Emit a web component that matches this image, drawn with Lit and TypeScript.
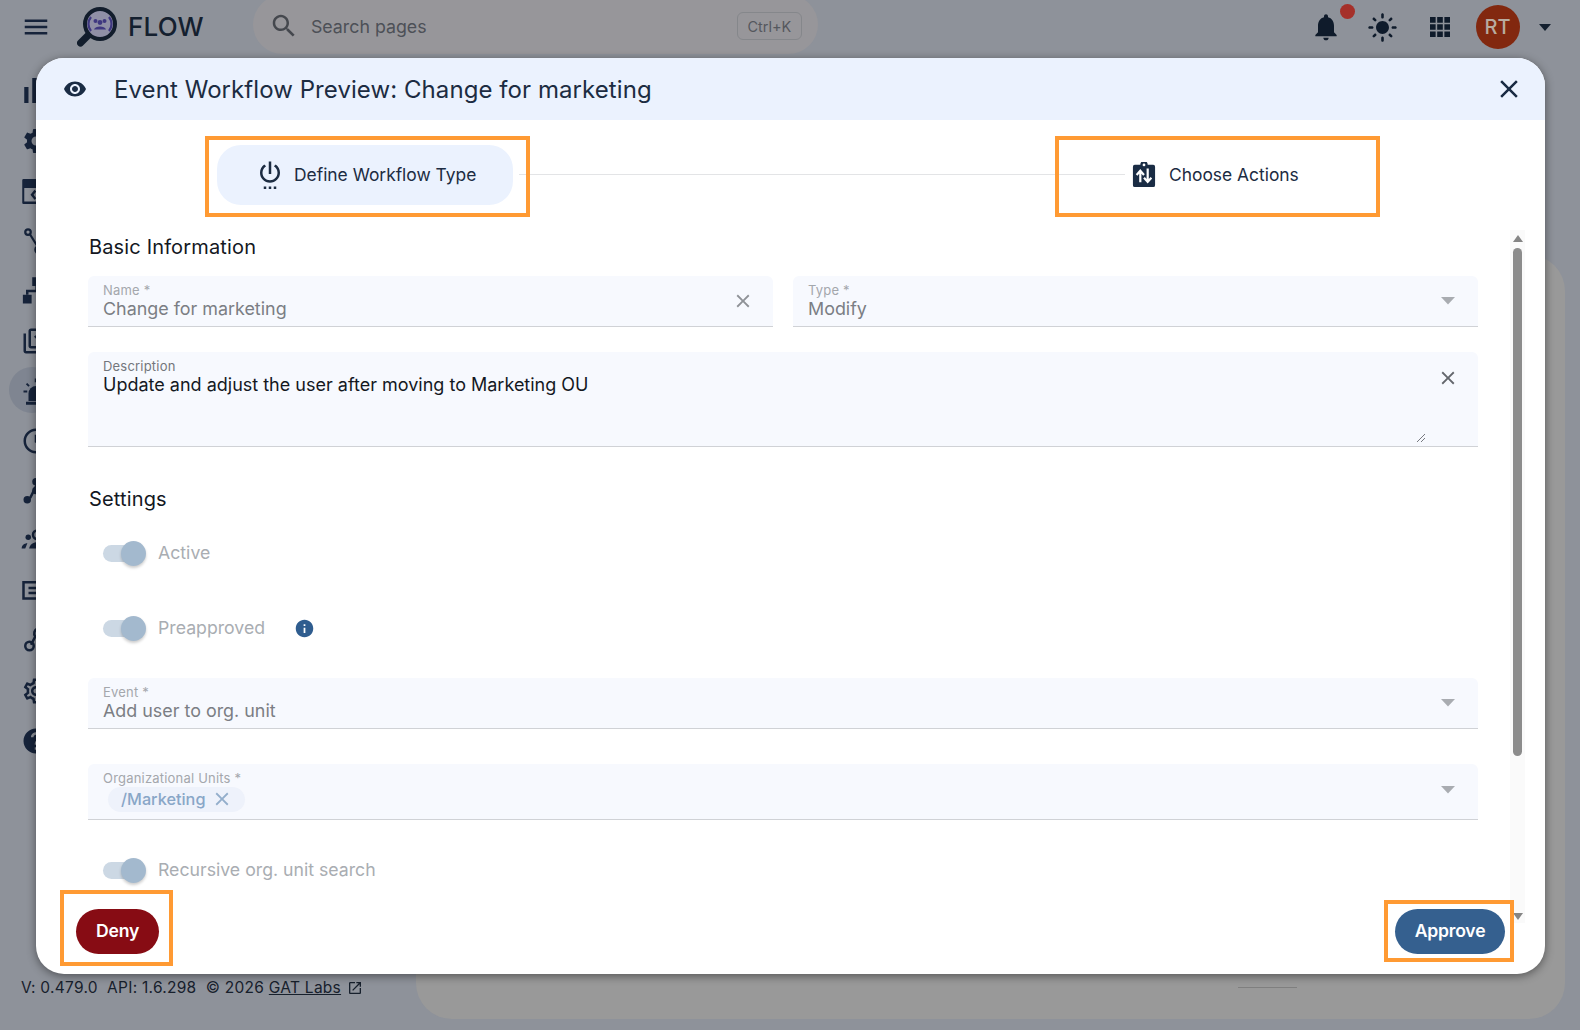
import { LitElement, html, svg, css } from 'lit';
import { customElement } from 'lit/decorators.js';

const P = {
  menu: 'M3 18h18v-2H3v2zm0-5h18v-2H3v2zm0-7v2h18V6H3z',
  search: 'M15.5 14h-.79l-.28-.27C15.41 12.59 16 11.11 16 9.5 16 5.91 13.09 3 9.5 3S3 5.91 3 9.5 5.91 16 9.5 16c1.61 0 3.09-.59 4.23-1.57l.27.28v.79l5 4.99L20.49 19l-4.99-5zm-6 0C7.01 14 5 11.99 5 9.5S7.01 5 9.5 5 14 7.01 14 9.5 11.99 14 9.5 14z',
  bell: 'M12 22c1.1 0 2-.9 2-2h-4c0 1.1.89 2 2 2zm6-6v-5c0-3.07-1.64-5.64-4.5-6.32V4c0-.83-.67-1.5-1.5-1.5s-1.5.67-1.5 1.5v.68C7.63 5.36 6 7.92 6 11v5l-2 2v1h16v-1l-2-2z',
  sun: 'M12 7c-2.76 0-5 2.24-5 5s2.24 5 5 5 5-2.24 5-5-2.24-5-5-5zM2 13h2c.55 0 1-.45 1-1s-.45-1-1-1H2c-.55 0-1 .45-1 1s.45 1 1 1zm18 0h2c.55 0 1-.45 1-1s-.45-1-1-1h-2c-.55 0-1 .45-1 1s.45 1 1 1zM11 2v2c0 .55.45 1 1 1s1-.45 1-1V2c0-.55-.45-1-1-1s-1 .45-1 1zm0 18v2c0 .55.45 1 1 1s1-.45 1-1v-2c0-.55-.45-1-1-1s-1 .45-1 1zM5.99 4.58c-.39-.39-1.03-.39-1.41 0-.39.39-.39 1.03 0 1.41l1.06 1.06c.39.39 1.03.39 1.41 0s.39-1.03 0-1.41L5.99 4.58zm12.37 12.37c-.39-.39-1.03-.39-1.41 0-.39.39-.39 1.03 0 1.41l1.06 1.06c.39.39 1.03.39 1.41 0 .39-.39.39-1.03 0-1.41l-1.06-1.06zm1.06-10.96c.39-.39.39-1.03 0-1.41-.39-.39-1.03-.39-1.41 0l-1.06 1.06c-.39.39-.39 1.03 0 1.41s1.03.39 1.41 0l1.06-1.06zM7.05 18.36c.39-.39.39-1.03 0-1.41-.39-.39-1.03-.39-1.41 0l-1.06 1.06c-.39.39-.39 1.03 0 1.41s1.03.39 1.41 0l1.06-1.06z',
  apps: 'M4 4h4.5v4.5H4zM9.75 4h4.5v4.5h-4.5zM15.5 4H20v4.5h-4.5zM4 9.75h4.5v4.5H4zM9.75 9.75h4.5v4.5h-4.5zM15.5 9.75H20v4.5h-4.5zM4 15.5h4.5V20H4zM9.75 15.5h4.5V20h-4.5zM15.5 15.5H20V20h-4.5z',
  eye: 'M12 4.5C7 4.5 2.73 7.61 1 12c1.73 4.39 6 7.5 11 7.5s9.27-3.11 11-7.5c-1.73-4.39-6-7.5-11-7.5zM12 17c-2.76 0-5-2.24-5-5s2.24-5 5-5 5 2.24 5 5-2.24 5-5 5zm0-8c-1.66 0-3 1.34-3 3s1.34 3 3 3 3-1.34 3-3-1.34-3-3-3z',
  close: 'M19 6.41L17.59 5 12 10.59 6.41 5 5 6.41 10.59 12 5 17.59 6.41 19 12 13.41 17.59 19 19 17.59 13.41 12z',
  power: 'M7 24h2v-2H7v2zm4 0h2v-2h-2v2zm2-22h-2v10h2V2zm3.56 2.44l-1.45 1.45C16.84 6.94 18 8.83 18 11c0 3.31-2.69 6-6 6s-6-2.69-6-6c0-2.17 1.16-4.06 2.88-5.12L7.44 4.44C5.36 5.88 4 8.28 4 11c0 4.42 3.58 8 8 8s8-3.58 8-8c0-2.72-1.36-5.12-3.44-6.56zM15 24h2v-2h-2v2z',
  info: 'M12 2C6.48 2 2 6.48 2 12s4.48 10 10 10 10-4.48 10-10S17.52 2 12 2zm1 15h-2v-6h2v6zm0-8h-2V7h2v2z',
  external: 'M19 19H5V5h7V3H5c-1.11 0-2 .9-2 2v14c0 1.1.89 2 2 2h14c1.1 0 2-.9 2-2v-7h-2v7zM14 3v2h3.59l-9.83 9.83 1.41 1.41L19 6.41V10h2V3h-7z',
  gear: 'M19.14 12.94c.04-.3.06-.61.06-.94 0-.32-.02-.64-.07-.94l2.03-1.58c.18-.14.23-.41.12-.61l-1.92-3.32c-.12-.22-.37-.29-.59-.22l-2.39.96c-.5-.38-1.03-.7-1.62-.94l-.36-2.54c-.04-.24-.24-.41-.48-.41h-3.84c-.24 0-.43.17-.47.41l-.36 2.54c-.59.24-1.13.57-1.62.94l-2.39-.96c-.22-.08-.47 0-.59.22L2.74 8.87c-.12.21-.08.47.12.61l2.03 1.58c-.05.3-.09.63-.09.94s.02.64.07.94l-2.03 1.58c-.18.14-.23.41-.12.61l1.92 3.32c.12.22.37.29.59.22l2.39-.96c.5.38 1.03.7 1.62.94l.36 2.54c.05.24.24.41.48.41h3.84c.24 0 .44-.17.47-.41l.36-2.54c.59-.24 1.13-.56 1.62-.94l2.39.96c.22.08.47 0 .59-.22l1.92-3.32c.12-.22.07-.47-.12-.61l-2.01-1.58zM12 15.6c-1.98 0-3.6-1.62-3.6-3.6s1.62-3.6 3.6-3.6 3.6 1.62 3.6 3.6-1.62 3.6-3.6 3.6z',
  gearOutline: 'M19.43 12.98c.04-.32.07-.64.07-.98 0-.34-.03-.66-.07-.98l2.11-1.65c.19-.15.24-.42.12-.64l-2-3.46c-.09-.16-.26-.25-.44-.25-.06 0-.12.01-.17.03l-2.49 1c-.52-.4-1.08-.73-1.69-.98l-.38-2.65C14.46 2.18 14.25 2 14 2h-4c-.25 0-.46.18-.49.42l-.38 2.65c-.61.25-1.17.59-1.69.98l-2.49-1c-.06-.02-.12-.03-.18-.03-.17 0-.34.09-.43.25l-2 3.46c-.13.22-.07.49.12.64l2.11 1.65c-.04.32-.07.65-.07.98 0 .33.03.66.07.98l-2.11 1.65c-.19.15-.24.42-.12.64l2 3.46c.09.16.26.25.44.25.06 0 .12-.01.17-.03l2.49-1c.52.4 1.08.73 1.69.98l.38 2.65c.03.24.24.42.49.42h4c.25 0 .46-.18.49-.42l.38-2.65c.61-.25 1.17-.59 1.69-.98l2.49 1c.06.02.12.03.18.03.17 0 .34-.09.43-.25l2-3.46c.12-.22.07-.49-.12-.64l-2.11-1.65zm-1.98-1.71c.04.31.05.52.05.73 0 .21-.02.43-.05.73l-.14 1.13.89.7 1.08.84-.7 1.21-1.27-.51-1.04-.42-.9.68c-.43.32-.84.56-1.25.73l-1.06.43-.16 1.13-.2 1.35h-1.4l-.19-1.35-.16-1.13-1.06-.43c-.43-.18-.83-.41-1.23-.71l-.91-.7-1.06.43-1.27.51-.7-1.21 1.08-.84.89-.7-.14-1.13c-.03-.31-.05-.54-.05-.74s.02-.43.05-.73l.14-1.13-.89-.7-1.08-.84.7-1.21 1.27.51 1.04.42.9-.68c.43-.32.84-.56 1.25-.73l1.06-.43.16-1.13.2-1.35h1.39l.19 1.35.16 1.13 1.06.43c.43.18.83.41 1.23.71l.91.7 1.06-.43 1.27-.51.7 1.21-1.07.85-.89.7.14 1.13zM12 8c-2.21 0-4 1.79-4 4s1.79 4 4 4 4-1.79 4-4-1.79-4-4-4zm0 6c-1.1 0-2-.9-2-2s.9-2 2-2 2 .9 2 2-.9 2-2 2z',
  help: 'M12 2C6.48 2 2 6.48 2 12s4.48 10 10 10 10-4.48 10-10S17.52 2 12 2zm1 17h-2v-2h2v2zm2.07-7.75l-.9.92C13.45 12.9 13 13.5 13 15h-2v-.5c0-1.1.45-2.1 1.17-2.83l1.24-1.26c.37-.36.59-.86.59-1.41 0-1.1-.9-2-2-2s-2 .9-2 2H8c0-2.21 1.79-4 4-4s4 1.79 4 4c0 .88-.36 1.68-.93 2.25z',
  clock: 'M11.99 2C6.47 2 2 6.48 2 12s4.47 10 9.99 10C17.52 22 22 17.52 22 12S17.52 2 11.99 2zM12 20c-4.42 0-8-3.58-8-8s3.58-8 8-8 8 3.58 8 8-3.58 8-8 8zm.5-13H11v6l5.25 3.15.75-1.23-4.5-2.67z',
  library: 'M4 6H2v14c0 1.1.9 2 2 2h14v-2H4V6zm16-4H8c-1.1 0-2 .9-2 2v12c0 1.1.9 2 2 2h12c1.1 0 2-.9 2-2V4c0-1.1-.9-2-2-2zm0 14H8V4h12v12z',
};

const icon = (d: string, size: number) =>
  html`<svg class="ic" width=${size} height=${size} viewBox="0 0 24 24"><path d=${d}></path></svg>`;

// left rail, only the first few pixels show beside the dialog
const rail = [
  svg`<rect x="2.6" y="8.8" width="3.4" height="12.8"/><rect x="9" y="1.6" width="3.4" height="20"/><rect x="15.5" y="9" width="3.4" height="12"/>`,
  svg`<path d=${P.gear}/>`,
  svg`<path fill-rule="evenodd" d="M2 2.4h22v20H2a1 1 0 0 1-1-1v-18a1 1 0 0 1 1-1zm.6 7.2v10.8H24V9.6z"/><path d="M10.8 11l-3.2 4 3.2 4 1.4-1.3-2.1-2.7 2.1-2.7z"/>`,
  svg`<circle cx="5.6" cy="4.8" r="2.2" fill="none" stroke="#16233a" stroke-width="1.8"/><path d="M7 6.4l6 9.6" fill="none" stroke="#16233a" stroke-width="1.8"/><circle cx="14.5" cy="19" r="3" fill="none" stroke="#16233a" stroke-width="1.8"/>`,
  svg`<path d="M9 1h7v7H9zM1.5 15h7v7h-7zM15 15h7v7h-7z"/><path d="M11.5 8h2v3H20v4h-2v-2H6v2H4v-4h7.5z"/>`,
  svg`<path d=${P.library}/><path d="M11 8l2 2 3-3" fill="none" stroke="#16233a" stroke-width="1.6"/>`,
  svg`<path d="M6 20v-6a6 6 0 0 1 12 0v6z"/><path d="M4 20.5h16V23H4zM2 11.5h3v1.6H2zM5 5.5l2 2-1.1 1.1-2-2zM11 2h2v3h-2z"/>`,
  svg`<path d=${P.clock}/>`,
  svg`<path d="M12 6l-6 12h2.2L12 10.5 15.8 18H18z"/><circle cx="12" cy="4.5" r="3"/><circle cx="12" cy="11.5" r="3"/><circle cx="5" cy="19" r="3"/><circle cx="19" cy="19" r="3"/>`,
  svg`<circle cx="5.8" cy="9" r="2.2"/><path d="M.5 18c0-2.5 2-4.2 4.6-4.2L3.4 18z"/><circle cx="13" cy="7" r="3.4" fill="none" stroke="#16233a" stroke-width="2"/><path d="M6.5 18c.5-3 3-5 6.5-5s6 2 6.5 5z"/>`,
  svg`<path fill-rule="evenodd" d="M1 4h23v15H1zm2 2v11h21V6z"/><path d="M6 8.5h13v2H6zM6 12.5h13v2H6z"/>`,
  svg`<circle cx="6.8" cy="16" r="3.4" fill="none" stroke="#16233a" stroke-width="2"/><path d="M8 15l3.4-6.5a4.4 4.4 0 0 1 1.6-6.5" fill="none" stroke="#16233a" stroke-width="2"/>`,
  svg`<path d=${P.gearOutline}/>`,
  svg`<path d=${P.help}/>`,
];

@customElement('app-root')
export class AppRoot extends LitElement {
  static styles = css`
    :host {
      display: block;
      width: 1580px;
      height: 1030px;
      overflow: hidden;
      position: relative;
      background: #8e929a;
      color: #16233a;
      font-family: Inter, "Noto Sans", sans-serif;
    }
    .ic { display: block; flex: none; fill: currentColor; }

    /* page behind the dialog */
    .topbar {
      height: 54px;
      display: flex;
      align-items: center;
      padding-left: 21px;
      padding-right: 16px;
    }
    .logo { margin-left: 26px; flex: none; }
    .brand {
      margin-left: 9px;
      margin-top: -2px;
      font-size: 26px;
      font-weight: 500;
      letter-spacing: 0.2px;
      color: #14202f;
    }
    .search {
      margin-left: 49px;
      margin-top: -5px;
      width: 565px;
      height: 59px;
      border-radius: 30px;
      background: #97969a;
      display: flex;
      align-items: center;
      padding: 3px 16px 0 16px;
      box-sizing: border-box;
      color: #45484e;
      font-size: 17.8px;
    }
    .search span.ph { margin-left: 12px; flex: 1; color: #4d5057; }
    .kbd {
      width: 65px;
      height: 28px;
      box-sizing: border-box;
      border: 1px solid #85878b;
      border-radius: 6px;
      font-size: 14.5px;
      display: flex;
      align-items: center;
      justify-content: center;
      color: #55585e;
    }
    .tools { margin-left: auto; display: flex; align-items: center; }
    .tool { width: 57px; display: flex; justify-content: center; position: relative; color: #0f1b2b; }
    .dot {
      position: absolute;
      left: 43px;
      top: -7px;
      width: 15px;
      height: 15px;
      border-radius: 50%;
      background: #a5302a;
    }
    .avatar {
      width: 44px;
      height: 44px;
      margin-left: 2px;
      border-radius: 50%;
      background: #82280f;
      color: #b8ab9f;
      font-size: 20px;
      font-weight: 500;
      display: flex;
      align-items: center;
      justify-content: center;
    }
    .caret {
      width: 0;
      height: 0;
      margin: 0 13px 0 14px;
      border-left: 6.5px solid transparent;
      border-right: 6.5px solid transparent;
      border-top: 7px solid #14202f;
    }
    .shell { display: flex; height: 976px; }
    .side {
      width: 416px;
      flex: none;
      display: flex;
      flex-direction: column;
      box-sizing: border-box;
      padding-top: 12px;
    }
    .rail-item {
      height: 50px;
      padding-left: 21px;
      display: flex;
      align-items: center;
      position: relative;
      color: #16233a;
    }
    .rail-item.active::before {
      content: "";
      position: absolute;
      left: 9px;
      top: 1px;
      width: 46px;
      height: 46px;
      border-radius: 50%;
      background: #7f8591;
    }
    .rail-item svg { position: relative; }
    .version {
      margin-top: auto;
      padding: 0 0 33px 21px;
      display: flex;
      align-items: center;
      font-size: 15.5px;
      letter-spacing: 0.27px;
      white-space: pre;
      color: #17202c;
    }
    .version a { color: inherit; text-decoration: underline; }
    .version svg { margin-left: 6px; }
    .panel {
      flex: 1;
      margin: 201px 15px 11px 0;
      border-radius: 36px;
      background: #999999;
      display: flex;
      align-items: flex-end;
      justify-content: flex-end;
      padding: 0 268px 31px 0;
    }
    .panel i { display: block; width: 59px; height: 1px; background: #7f7f7f; }

    /* dialog */
    .modal {
      position: absolute;
      left: 36px;
      top: 58px;
      width: 1509px;
      height: 916px;
      border-radius: 28px;
      overflow: hidden;
      background: #fff;
      box-shadow: 0 2px 10px rgba(0, 0, 0, 0.45);
      display: flex;
      flex-direction: column;
    }
    .head {
      height: 62px;
      flex: none;
      background: #ebf2fe;
      display: flex;
      align-items: center;
      padding: 0 21px 0 27px;
      color: #1a2c44;
    }
    .head h2 {
      margin: 0 0 0 27px;
      flex: 1;
      font-size: 24px;
      font-weight: 400;
      letter-spacing: 0.07px;
      color: #1c2c42;
    }
    .steps {
      height: 110px;
      flex: none;
      box-sizing: border-box;
      display: flex;
      align-items: center;
      padding-left: 181px;
      color: #1c2c42;
      font-size: 17.4px;
    }
    .step-on {
      width: 296px;
      height: 60px;
      border-radius: 24px;
      background: #ebf2fe;
      display: flex;
      align-items: center;
      padding-left: 38px;
      box-sizing: border-box;
    }
    .step-on span { margin-left: 9px; padding-bottom: 2px; }
    .step-on svg { margin-top: -2px; }
    .line { width: 606px; height: 1px; margin-left: 6px; margin-bottom: 2px; background: #e3e4e6; }
    .step-off { display: flex; align-items: center; margin-left: 7px; padding-bottom: 2px; }
    .step-off span { margin-left: 13px; }

    .body { height: 693px; flex: none; display: flex; overflow: hidden; }
    .form { flex: 1; padding: 5px 32px 0 52px; min-width: 0; }
    .form h3 {
      margin: 0;
      padding-left: 1px;
      font-size: 20px;
      line-height: 24px;
      font-weight: 400;
      letter-spacing: 0.15px;
      color: #14181f;
    }
    .two { display: grid; grid-template-columns: 1fr 1fr; column-gap: 20px; margin-top: 17px; }
    .field {
      display: flex;
      align-items: center;
      box-sizing: border-box;
      height: 51px;
      padding: 0 20px 0 15px;
      background: #f7f9fe;
      border-radius: 6px 6px 0 0;
      border-bottom: 1px solid #d0d2d6;
    }
    .grow { flex: 1; min-width: 0; align-self: flex-start; padding-top: 6px; }
    .lab { font-size: 13px; line-height: 16px; letter-spacing: 0.2px; color: #a4a7ac; }
    .val { font-size: 17.9px; line-height: 22px; color: #7b7e84; }
    .x { color: #8f9297; margin-right: -1px; }
    .arrow { fill: #a9acb1; margin-right: 3px; }
    .field.desc { height: 95px; margin-top: 25px; position: relative; }
    .desc .lab { color: #73767c; }
    .desc .val { color: #14181f; font-size: 18px; }
    .desc .x { color: #63666c; align-self: flex-start; margin-top: 15px; }
    .grip { position: absolute; right: 52px; bottom: 3px; }
    .sec2 { margin-top: 40px !important; }
    .row {
      height: 40px;
      box-sizing: border-box;
      display: flex;
      align-items: center;
      padding: 0 0 2px 15px;
      font-size: 17.7px;
      color: #a9adb2;
    }
    .toggle { width: 43px; height: 25px; position: relative; top: 1px; margin-right: 12px; flex: none; }
    .toggle::before {
      content: "";
      position: absolute;
      left: 0;
      top: 4px;
      width: 38px;
      height: 17px;
      border-radius: 9px;
      background: #ccd8e4;
    }
    .toggle::after {
      content: "";
      position: absolute;
      right: 0;
      top: 0;
      width: 25px;
      height: 25px;
      border-radius: 50%;
      background: #a3b9ce;
      box-shadow: 0 2px 3px rgba(0, 0, 0, 0.2);
    }
    .r1 { margin-top: 22px; }
    .r2 { margin-top: 35px; }
    .r3 { margin-top: 30px; }
    .tip { margin-left: 29px; color: #2f5d8f; position: relative; top: 1px; }
    .f-event { margin-top: 30px; }
    .f-ou { margin-top: 35px; height: 56px; }
    .f-ou .arrow { margin-top: -3px; }
    .chip {
      margin-top: 1px;
      width: 137px;
      height: 25px;
      margin-left: 5px;
      box-sizing: border-box;
      padding: 0 0 1px 13px;
      border-radius: 13px;
      background: #eef2fb;
      display: flex;
      align-items: center;
      color: #88a6c7;
      font-size: 16.3px;
      font-weight: 500;
    }
    .chip svg { margin-left: 5px; color: #93aecb; }

    .bar {
      width: 15px;
      margin-right: 20px;
      flex: none;
      background: #fafafa;
      display: flex;
      flex-direction: column;
      align-items: center;
    }
    .up, .down { width: 0; height: 0; border-left: 5px solid transparent; border-right: 5px solid transparent; }
    .up { margin-top: 5px; border-bottom: 7px solid #858585; }
    .thumb { width: 9px; height: 508px; margin-top: 6px; border-radius: 5px; background: #8c8c8c; }
    .down { margin-top: auto; margin-bottom: 3px; border-top: 7px solid #858585; }

    .actions {
      position: absolute;
      left: 40px;
      right: 40px;
      bottom: 20px;
      display: flex;
      justify-content: space-between;
    }
    .btn {
      height: 45px;
      border: 0;
      border-radius: 23px;
      color: #fff;
      font: 600 17.6px Inter, sans-serif;
      letter-spacing: -0.2px;
      padding: 0 0 2px;
    }
    .deny { width: 83px; background: #870c14; }
    .approve { width: 110px; background: #35608f; }

    /* orange annotation frames laid over the dialog */
    .mark { position: absolute; border: 4px solid #ff9a33; box-sizing: border-box; }
    .m1 { left: 169px; top: 78px; width: 325px; height: 81px; }
    .m2 { left: 1019px; top: 78px; width: 325px; height: 81px; }
    .m3 { left: 24px; top: 832px; width: 113px; height: 76px; }
    .m4 { left: 1348px; top: 842px; width: 130px; height: 62px; }
  `;

  render() {
    return html`
      <div class="topbar">
        ${icon(P.menu, 30)}
        <svg class="logo" width="42" height="48" viewBox="0 0 42 48">
          <path d="M3.5 40l9-9" stroke="#121d2c" stroke-width="7" stroke-linecap="round"></path>
          <circle cx="23" cy="21" r="15" fill="#8f8fa6" stroke="#121d2c" stroke-width="4"></circle>
          <circle cx="18.5" cy="18" r="2" fill="#3f3880"></circle>
          <circle cx="27.5" cy="18" r="2" fill="#3f3880"></circle>
          <circle cx="23" cy="19.5" r="2.4" fill="#3f3880"></circle>
          <path d="M17 26.5c1-4 11-4 12 0z" fill="#3f3880"></path>
          <path d="M14 14a11 11 0 0 0 0 14M32 14a11 11 0 0 1 0 14" fill="none" stroke="#3f3880" stroke-width="2.2"></path>
        </svg>
        <span class="brand">FLOW</span>
        <div class="search">
          ${icon(P.search, 30)}
          <span class="ph">Search pages</span>
          <span class="kbd">Ctrl+K</span>
        </div>
        <div class="tools">
          <div class="tool">${icon(P.bell, 32)}<span class="dot"></span></div>
          <div class="tool">${icon(P.sun, 31)}</div>
          <div class="tool">${icon(P.apps, 30)}</div>
          <div class="tool"><span class="avatar">RT</span></div>
          <span class="caret"></span>
        </div>
      </div>

      <div class="shell">
        <div class="side">
          ${rail.map((g, i) => html`
            <div class="rail-item ${i === 6 ? 'active' : ''}">
              <svg class="ic" width="30" height="30" viewBox="0 0 24 24">${g}</svg>
            </div>`)}
          <div class="version"><span>V: 0.479.0  API: 1.6.298  © 2026 <a>GAT Labs</a></span>${icon(P.external, 16)}</div>
        </div>
        <div class="panel"><i></i></div>
      </div>

      <div class="modal">
        <div class="head">
          ${icon(P.eye, 24)}
          <h2>Event Workflow Preview: Change for marketing</h2>
          ${icon(P.close, 30)}
        </div>
        <div class="steps">
          <div class="step-on">${icon(P.power, 30)}<span>Define Workflow Type</span></div>
          <div class="line"></div>
          <div class="step-off">
            <svg width="24" height="25" viewBox="0 0 26 27" preserveAspectRatio="none">
              <path d="M3 3h6a4 4 0 0 1 8 0h6a2 2 0 0 1 2 2v20a2 2 0 0 1-2 2H3a2 2 0 0 1-2-2V5a2 2 0 0 1 2-2z" fill="#1a2c44"></path>
              <circle cx="13" cy="3.2" r="1.5" fill="#fff"></circle>
              <path d="M9 22V10M5 14l4-4.5 4 4.5M17 7v14M13 17l4 4.5 4-4.5" fill="none" stroke="#fff" stroke-width="2.4"></path>
            </svg>
            <span>Choose Actions</span>
          </div>
        </div>

        <div class="body">
          <div class="form">
            <h3>Basic Information</h3>
            <div class="two">
              <div class="field">
                <div class="grow"><div class="lab">Name *</div><div class="val">Change for marketing</div></div>
                <span class="x">${icon(P.close, 22)}</span>
              </div>
              ${this.selectField('Type *', 'Modify')}
            </div>
            <div class="field desc">
              <div class="grow"><div class="lab">Description</div><div class="val">Update and adjust the user after moving to Marketing OU</div></div>
              <span class="x">${icon(P.close, 22)}</span>
              <svg class="grip" width="10" height="10" viewBox="0 0 10 10"><path d="M1 9l8-8M5 9l4-4" stroke="#55585e" stroke-width="0.8"></path></svg>
            </div>

            <h3 class="sec2">Settings</h3>
            <div class="row r1"><span class="toggle"></span>Active</div>
            <div class="row r2"><span class="toggle"></span>Preapproved<span class="tip">${icon(P.info, 21)}</span></div>
            <div class="f-event">${this.selectField('Event *', 'Add user to org. unit')}</div>
            <div class="field f-ou">
              <div class="grow">
                <div class="lab">Organizational Units *</div>
                <div class="chip">/Marketing ${icon(P.close, 22)}</div>
              </div>
              ${this.caret()}
            </div>
            <div class="row r3"><span class="toggle"></span>Recursive org. unit search</div>
          </div>
          <div class="bar"><span class="up"></span><span class="thumb"></span><span class="down"></span></div>
        </div>

        <div class="actions">
          <button class="btn deny">Deny</button>
          <button class="btn approve">Approve</button>
        </div>

        <span class="mark m1"></span>
        <span class="mark m2"></span>
        <span class="mark m3"></span>
        <span class="mark m4"></span>
      </div>
    `;
  }

  caret() {
    return html`<svg class="arrow" width="14" height="8" viewBox="0 0 14 8"><path d="M0 0h14L7 7.5z"></path></svg>`;
  }

  selectField(label: string, value: string) {
    return html`
      <div class="field">
        <div class="grow"><div class="lab">${label}</div><div class="val">${value}</div></div>
        ${this.caret()}
      </div>`;
  }
}
